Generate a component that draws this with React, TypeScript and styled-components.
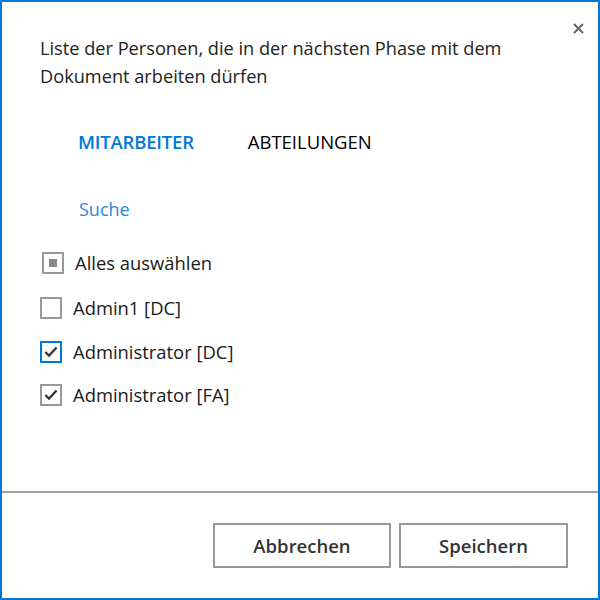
import React, { useState } from 'react';
import styled, { createGlobalStyle } from 'styled-components';

const GlobalStyle = createGlobalStyle`
  html, body {
    margin: 0;
    padding: 0;
    background: #ffffff;
  }
  body {
    font-family: 'Open Sans', 'Noto Sans', sans-serif;
  }
`;

const Dialog = styled.div`
  position: relative;
  width: 600px;
  height: 600px;
  box-sizing: border-box;
  border: 2px solid #0078d7;
  background: #fff;
  display: flex;
  flex-direction: column;
`;

const CloseButton = styled.button`
  position: absolute;
  top: 16px;
  right: 10px;
  width: 20px;
  height: 20px;
  padding: 0;
  border: none;
  background: transparent;
  display: flex;
  align-items: center;
  justify-content: center;
  cursor: pointer;
`;

const Body = styled.div`
  flex: 1;
  padding: 32px 0 0 38px;
`;

const Title = styled.div`
  font-size: 18.2px;
  line-height: 28px;
  color: #222;
  width: 510px;
`;

const Tabs = styled.div`
  display: flex;
  gap: 54px;
  margin: 40px 0 0 38px;
`;

const Tab = styled.div<{ $active?: boolean }>`
  font-size: 18.5px;
  line-height: 24px;
  font-weight: ${(p) => (p.$active ? 600 : 400)};
  color: ${(p) => (p.$active ? '#0078d7' : '#000')};
  letter-spacing: ${(p) => (p.$active ? '-0.2px' : '0')};
  cursor: pointer;
`;

const Search = styled.input`
  display: block;
  margin: 43px 0 0 39px;
  border: none;
  outline: none;
  padding: 0;
  font-family: inherit;
  font-size: 18px;
  line-height: 24px;
  height: 24px;
  width: 300px;
  color: #222;
  &::placeholder {
    color: #2b88d8;
  }
`;

const List = styled.div`
  margin-top: 31px;
  display: flex;
  flex-direction: column;
  gap: 21.5px;
`;

const Row = styled.label<{ $indent?: number; $extra?: number }>`
  display: flex;
  align-items: center;
  gap: 11px;
  padding-left: ${(p) => p.$indent || 0}px;
  margin-bottom: ${(p) => p.$extra || 0}px;
  font-size: 18.4px;
  line-height: 22px;
  color: #1a1a1a;
  cursor: pointer;
`;

const Box = styled.span<{ $focus?: boolean }>`
  width: 22px;
  height: 22px;
  box-sizing: border-box;
  border: 2px solid ${(p) => (p.$focus ? '#0078d7' : '#999')};
  display: flex;
  align-items: center;
  justify-content: center;
  flex-shrink: 0;
`;

const Partial = styled.span`
  width: 8px;
  height: 8px;
  background: #888;
`;

const Footer = styled.div`
  border-top: 2px solid #a0a0a0;
  height: 107px;
  box-sizing: border-box;
  display: flex;
  justify-content: flex-end;
  align-items: flex-start;
  gap: 8px;
  padding: 30px 30px 0 0;
`;

const Button = styled.button<{ $w: number }>`
  width: ${(p) => p.$w}px;
  height: 45px;
  box-sizing: border-box;
  border: 2px solid #999;
  background: #fff;
  font-family: inherit;
  font-size: 18.5px;
  font-weight: 600;
  color: #333;
  cursor: pointer;
`;

type Person = { name: string; checked: boolean };

const Check = () => (
  <svg width="14" height="12" viewBox="0 0 14 12">
    <path d="M1.3 6 L5 9.6 L12.6 1.4" fill="none" stroke="#333" strokeWidth="2.2" />
  </svg>
);

export default function App() {
  const [people, setPeople] = useState<Person[]>([
    { name: 'Admin1 [DC]', checked: false },
    { name: 'Administrator [DC]', checked: true },
    { name: 'Administrator [FA]', checked: true },
  ]);
  const [tab, setTab] = useState(0);

  const toggle = (i: number) =>
    setPeople((ps) => ps.map((p, j) => (j === i ? { ...p, checked: !p.checked } : p)));

  return (
    <>
      <GlobalStyle />
      <Dialog>
        <CloseButton aria-label="Schließen">
          <svg width="11" height="11" viewBox="0 0 11 11">
            <path d="M1 1 L10 10 M10 1 L1 10" stroke="#666" strokeWidth="2" />
          </svg>
        </CloseButton>
        <Body>
          <Title>Liste der Personen, die in der nächsten Phase mit dem Dokument arbeiten dürfen</Title>
          <Tabs>
            <Tab $active={tab === 0} onClick={() => setTab(0)}>MITARBEITER</Tab>
            <Tab $active={tab === 1} onClick={() => setTab(1)}>ABTEILUNGEN</Tab>
          </Tabs>
          <Search placeholder="Suche" />
          <List>
            <Row $indent={2} $extra={1.5}>
              <Box>
                <Partial />
              </Box>
              Alles auswählen
            </Row>
            {people.map((p, i) => (
              <Row key={p.name} onClick={() => toggle(i)}>
                <Box $focus={i === 1}>{p.checked && <Check />}</Box>
                {p.name}
              </Row>
            ))}
          </List>
        </Body>
        <Footer>
          <Button $w={178}>Abbrechen</Button>
          <Button $w={169}>Speichern</Button>
        </Footer>
      </Dialog>
    </>
  );
}
